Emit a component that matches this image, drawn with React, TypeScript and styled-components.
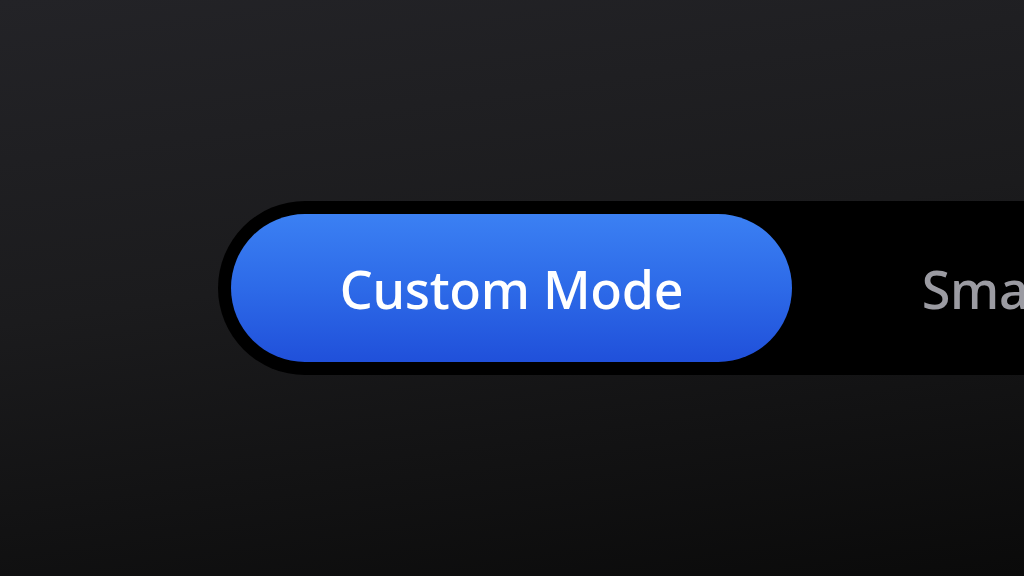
import styled, { createGlobalStyle } from "styled-components";

const GlobalStyle = createGlobalStyle`
    html, body {
        margin: 0;
        padding: 0;
        overflow: hidden;
    }
    body {
        font-family: "Noto Sans", "Open Sans", sans-serif;
    }
`;

const Page = styled.div`
    width: 100vw;
    height: 100vh;
    display: flex;
    align-items: center;
    padding-left: 218px;
    box-sizing: border-box;
    overflow: hidden;
    background: linear-gradient(172deg, #232327 0%, #1b1b1d 45%, #0a0a0a 100%);
`;

const Switcher = styled.div`
    display: flex;
    flex-shrink: 0;
    padding: 13px;
    background-color: #000;
    border-radius: 87px;
`;

const Segment = styled.div<{ $active?: boolean }>`
    width: 561px;
    height: 148px;
    border-radius: 74px;
    display: flex;
    align-items: center;
    justify-content: center;
    flex-shrink: 0;
    font-size: 52px;
    font-weight: 500;
    letter-spacing: -0.3px;
    color: ${(props) => (props.$active ? "#ffffff" : "#9b9ba2")};
    background: ${(props) =>
        props.$active
            ? "linear-gradient(180deg, #3b80f3 0%, #2d6ae8 50%, #2050da 100%)"
            : "transparent"};
`;

const modes = ["Custom Mode", "Smart Mode"];

export default function App() {
    return (
        <>
            <GlobalStyle />
            <Page>
                <Switcher>
                    {modes.map((mode, i) => (
                        <Segment key={mode} $active={i === 0}>
                            {mode}
                        </Segment>
                    ))}
                </Switcher>
            </Page>
        </>
    );
}
